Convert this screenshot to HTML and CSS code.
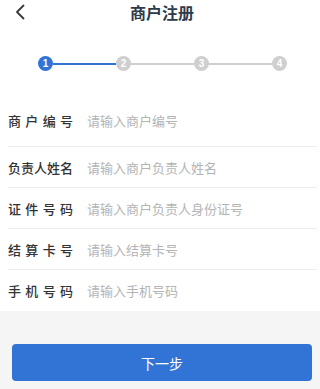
FILE: index.html
```html
<!DOCTYPE html>
<html lang="zh-CN">
<head>
  <meta charset="UTF-8">
  <title>商户注册</title>
  <link rel="stylesheet" href="styles.css">
</head>
<body>
<div class="page">
  <header class="header">
    <button class="header__back" aria-label="返回">
      <svg viewBox="0 0 12 16" width="12" height="16">
        <path d="M9.5 1.5L3 8l6.5 6.5" fill="none" stroke="#3a3a3a" stroke-width="1.8" stroke-linecap="round" stroke-linejoin="round"/>
      </svg>
    </button>
    <h1 class="header__title">商户注册</h1>
  </header>

  <div class="steps">
    <span class="steps__dot steps__dot--active">1</span>
    <span class="steps__line steps__line--active"></span>
    <span class="steps__dot">2</span>
    <span class="steps__line"></span>
    <span class="steps__dot">3</span>
    <span class="steps__line"></span>
    <span class="steps__dot">4</span>
  </div>

  <form class="form">
    <label class="form__row form__row--first">
      <span class="form__label">商户编号</span>
      <input class="form__input" type="text" placeholder="请输入商户编号">
    </label>
    <label class="form__row">
      <span class="form__label">负责人姓名</span>
      <input class="form__input" type="text" placeholder="请输入商户负责人姓名">
    </label>
    <label class="form__row">
      <span class="form__label">证件号码</span>
      <input class="form__input" type="text" placeholder="请输入商户负责人身份证号">
    </label>
    <label class="form__row">
      <span class="form__label">结算卡号</span>
      <input class="form__input" type="text" placeholder="请输入结算卡号">
    </label>
    <label class="form__row form__row--last">
      <span class="form__label">手机号码</span>
      <input class="form__input" type="tel" placeholder="请输入手机号码">
    </label>
  </form>

  <div class="footer">
    <button class="footer__next" type="button">下一步</button>
  </div>
</div>
</body>
</html>
```

FILE: styles.css
```css
* {
  margin: 0;
  padding: 0;
  box-sizing: border-box;
}

:root {
  --color-blue: #3273d6;
  --color-gray: #cfcfcf;
  --color-text: #333;
  --color-placeholder: #b4b4b4;
  --color-line: #ececec;
  --color-bg: #f5f5f5;
}

body {
  font-family: "Noto Sans CJK SC", "Noto Sans", sans-serif;
  background: #fff;
  color: var(--color-text);
}

.page {
  width: 320px;
  height: 389px;
  display: flex;
  flex-direction: column;
}

.header {
  height: 25px;
  display: flex;
  align-items: center;
  justify-content: center;
  position: relative;
}

.header__back {
  position: absolute;
  left: 14px;
  top: 4px;
  border: none;
  background: transparent;
  display: flex;
}

.header__title {
  font-size: 16px;
  font-weight: 700;
  color: #2c3a4a;
  line-height: 25px;
  margin-left: 4px;
}

.steps {
  display: flex;
  align-items: center;
  margin-top: 31px;
  padding: 0 33px 0 38px;
}

.steps__dot {
  width: 15px;
  height: 15px;
  border-radius: 50%;
  background: var(--color-gray);
  color: #fff;
  font-family: "Liberation Sans", sans-serif;
  font-size: 10px;
  font-weight: 700;
  display: flex;
  align-items: center;
  justify-content: center;
  flex: none;
}

.steps__dot--active {
  background: var(--color-blue);
}

.steps__line {
  flex: 1;
  height: 2px;
  background: var(--color-gray);
}

.steps__line--active {
  background: var(--color-blue);
}

.form {
  margin-top: 29px;
  padding-left: 8px;
  padding-right: 3px;
}

.form__row {
  height: 41px;
  display: flex;
  align-items: center;
  border-bottom: 1px solid var(--color-line);
}

.form__row--first {
  height: 47px;
  padding-bottom: 6px;
}

.form__row--last {
  border-bottom: none;
}

.form__label {
  width: 65px;
  font-size: 13px;
  font-weight: 500;
  text-align: justify;
  text-align-last: justify;
  color: var(--color-text);
  flex: none;
}

.form__input {
  margin-left: 14px;
  flex: 1;
  border: none;
  outline: none;
  background: transparent;
  font-family: inherit;
  font-size: 13px;
  color: var(--color-text);
}

.form__input::placeholder {
  color: var(--color-placeholder);
}

.footer {
  flex: 1;
  background: var(--color-bg);
  padding: 33px 8px 0 12px;
}

.footer__next {
  width: 100%;
  height: 37px;
  border: none;
  border-radius: 4px;
  background: var(--color-blue);
  color: #fff;
  font-family: inherit;
  font-size: 14px;
  cursor: pointer;
}
```
